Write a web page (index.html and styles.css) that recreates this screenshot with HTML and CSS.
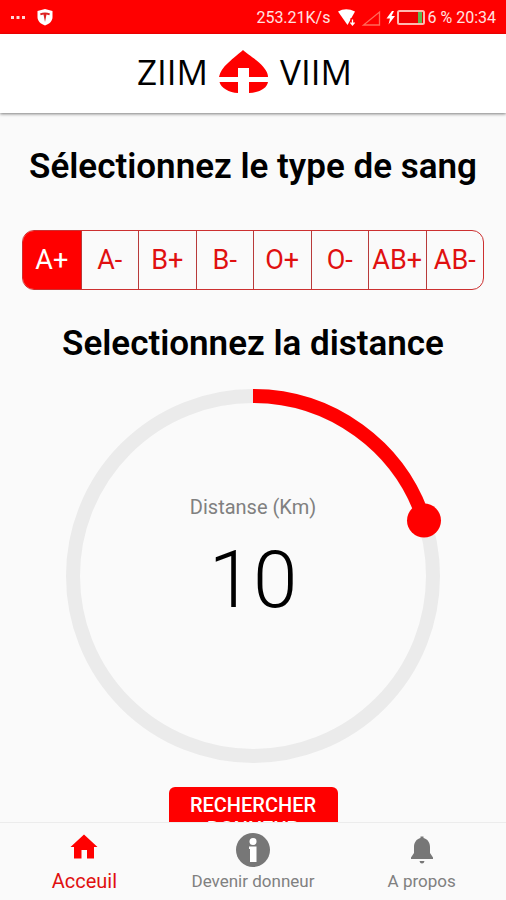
FILE: index.html
```html
<!DOCTYPE html>
<html lang="fr">
<head>
<meta charset="utf-8">
<meta name="viewport" content="width=device-width, initial-scale=1">
<title>Ziim Viim</title>
<link rel="stylesheet" href="styles.css">
</head>
<body>
<div class="status">
  <svg class="status-dots" width="16" height="34" viewBox="0 0 16 34" fill="#ffd6d6"><path d="M1 16h3v3H1zM6.500 16h3v3h-3zM12 16h3v3h-3z"/></svg>
  <svg class="status-shield" width="16" height="34" viewBox="0 0 16 34"><path d="M8 9 15.500 11v6c0 4-3 7-7.500 8.500C3.500 24 .5 21 .5 17v-6z" fill="#fff"/><path d="M3 13.500q5-2 10 0l-.7 1.700-2.800-.6L8 22l-1.500-7.400-2.800.6z" fill="#d22"/></svg>
  <span class="status-speed">253.21K/s</span>
  <svg width="44" height="34" viewBox="0 0 44 34"><path d="M0 11.500Q8 7 17 11.500L9.500 25z" fill="#fff"/><path d="M14.500 18v8" fill="none" stroke="#f00" stroke-width="4"/><path d="M14.500 19.500v5M12.500 22.500l2 2.500 2-2.500" fill="none" stroke="#fff" stroke-width="1.300"/><path d="M25.500 25H41.500V12z" fill="none" stroke="#ff6a5a" stroke-width="1.300"/></svg>
  <svg class="status-battery" width="40" height="34" viewBox="0 0 40 34"><path d="M6 11 .5 18.500H4L2.500 24.500 9 16H5.500L8 11z" fill="#fff"/><rect x="12" y="11" width="26" height="13" rx="1.500" fill="#e00" stroke="#ffb9b0" stroke-width="2"/><path d="M32 12h4v11h-4z" fill="#5cb850"/></svg>
  <span>6 %</span>
  <span class="status-time">20:34</span>
</div>
<header class="brand">
  <span>ZIIM</span>
  <svg width="50" height="44" viewBox="0 0 50 44" fill="#f00"><path d="M24 0C27 3 35 8 40 12.500 46 18 49 23 49 27H30V18H19v9H0C1 22 4 17 9 13 14 8 21 3 24 0z"/><path d="M.5 32H19v11C10 42.500 2 38 .5 32zM49 32H30v11C41 42.500 48 38 49 32z"/></svg>
  <span>VIIM</span>
</header>
<main class="content">
  <h1 class="title" id="type-title">Sélectionnez le type de sang</h1>
  <div class="types" role="radiogroup" aria-labelledby="type-title">
    <label class="type"><input type="radio" name="type" checked><span>A+</span></label>
    <label class="type"><input type="radio" name="type"><span>A-</span></label>
    <label class="type"><input type="radio" name="type"><span>B+</span></label>
    <label class="type"><input type="radio" name="type"><span>B-</span></label>
    <label class="type"><input type="radio" name="type"><span>O+</span></label>
    <label class="type"><input type="radio" name="type"><span>O-</span></label>
    <label class="type"><input type="radio" name="type"><span>AB+</span></label>
    <label class="type"><input type="radio" name="type"><span>AB-</span></label>
  </div>
  <h2 class="title">Selectionnez la distance</h2>
  <div class="dial">
    <svg class="dial-ring" viewBox="0 0 374 374" fill="none" stroke-width="14"><circle cx="187" cy="187" r="180" stroke="#ebebeb"/><path d="M187 7A180 180 0 0 1 358.200 131.400" stroke="#f00"/><circle cx="358" cy="131.500" r="17" fill="#f00" stroke="none"/></svg>
    <div class="dial-text">
      <label class="dial-label" for="distance">Distanse (Km)</label>
      <output class="dial-value" for="distance">10</output>
    </div>
    <input class="dial-input" id="distance" type="range" min="0" max="50" value="10">
  </div>
  <button class="search" type="button">RECHERCHER DONNEUR</button>
</main>
<nav class="tabs">
  <a class="tab tab-active" href="#accueil">
    <svg width="28" height="34" viewBox="0 0 28 34" fill="#f00"><path d="M14 1.500 27.500 14H24V25.500H17V17H11.500V25.500H4V14H.5z"/></svg>
    <span>Acceuil</span>
  </a>
  <a class="tab" href="#donneur">
    <svg width="34" height="34" viewBox="0 0 34 34"><circle cx="17" cy="17" r="17" fill="#777"/><circle cx="17" cy="8.500" r="3.500" fill="#fff"/><path d="M13 13.500h7.500V29H14V16h-1z" fill="#fff"/></svg>
    <span>Devenir donneur</span>
  </a>
  <a class="tab" href="#apropos">
    <svg width="24" height="34" viewBox="0 0 24 34" fill="#777"><path d="M10.500 5V3.500h3V5c4 1 6.500 4.500 6.500 9v6l3 4.500v1.500H1v-1.500L4 20v-6c0-4.500 2.500-8 6.500-9z"/><path d="M9.500 28h5q-.5 2.500-2.500 2.500T9.500 28z"/></svg>
    <span>A propos</span>
  </a>
</nav>
</body>
</html>
```
FILE: styles.css
```css
* {
  box-sizing: border-box;
}

body {
  display: flex;
  flex-direction: column;
  height: 100vh;
  margin: 0;
  background: #fafafa;
  color: #000;
  font-family: Roboto, "Liberation Sans", sans-serif;
}

svg {
  flex: none;
}

.status {
  display: flex;
  flex: none;
  align-items: center;
  height: 34px;
  padding: 0 10px;
  background: #f00;
  color: #ffe2e0;
  font-size: 16px;
  line-height: 34px;
  white-space: nowrap;
}

.status-shield {
  margin-left: 11px;
}

.status-speed {
  margin: 0 8px 0 auto;
}

.status-battery {
  margin: 0 1px 0 4px;
}

.status-time {
  margin-left: 4px;
}

.status span {
  padding-top: 2px;
}

.brand {
  position: relative;
  display: flex;
  flex: none;
  align-items: center;
  justify-content: center;
  gap: 11px;
  height: 79px;
  padding: 0 17px 4px 0;
  background: #fff;
  box-shadow: 0 1px 3px rgba(0, 0, 0, 0.5);
  font-family: "Open Sans", "Liberation Sans", sans-serif;
  font-size: 35px;
}

.content {
  display: flex;
  flex: 1;
  flex-direction: column;
  align-items: center;
  min-height: 0;
  padding: 33px 22px 0;
  overflow: hidden;
}

.title {
  flex: none;
  margin: 0;
  font-size: 35px;
  font-weight: 600;
  line-height: 42px;
  white-space: nowrap;
}

.types {
  display: grid;
  flex: none;
  grid-template-columns: repeat(8, 1fr);
  width: 100%;
  height: 60px;
  margin: 42px 0 33px;
  overflow: hidden;
  border: 1px solid #cc3030;
  border-radius: 12px;
}

.type {
  position: relative;
  display: flex;
  align-items: stretch;
  color: #e01010;
  font-size: 27px;
}

.type + .type {
  border-left: 1px solid #b83a3a;
}

.type input {
  position: absolute;
  inset: 0;
  margin: 0;
  opacity: 0;
}

.type span {
  display: flex;
  flex: 1;
  align-items: center;
  justify-content: center;
  white-space: nowrap;
}

.type input:checked + span {
  background: #f00;
  color: #fff;
}

.dial {
  position: relative;
  flex: none;
  width: 374px;
  max-width: 100%;
  margin: 24px 0;
}

.dial-ring {
  display: block;
  width: 100%;
  overflow: visible;
}

.dial-text {
  position: absolute;
  inset: 0;
  display: flex;
  flex-direction: column;
  align-items: center;
  justify-content: center;
}

.dial-label {
  color: #808080;
  font-size: 20px;
  line-height: 24px;
}

.dial-value {
  margin-bottom: 16px;
  font-size: 80px;
  font-weight: 300;
  line-height: 122px;
}

.dial-input {
  position: absolute;
  inset: 0;
  width: 100%;
  height: 100%;
  margin: 0;
  opacity: 0;
}

.search {
  flex: none;
  width: 169px;
  padding: 6px 20px;
  border: 0;
  border-radius: 6px;
  background: #f00;
  color: #fff;
  font: 500 20px/24px Roboto, "Liberation Sans", sans-serif;
}

.tabs {
  display: grid;
  flex: none;
  grid-template-columns: repeat(3, 1fr);
  height: 78px;
  border-top: 1px solid #ececec;
}

.tab {
  display: flex;
  flex-direction: column;
  align-items: center;
  gap: 2px;
  padding-top: 10px;
  color: #808080;
  font-size: 17px;
  line-height: 24px;
  text-decoration: none;
}

.tab-active {
  color: #e01010;
  font-size: 20px;
}
```
